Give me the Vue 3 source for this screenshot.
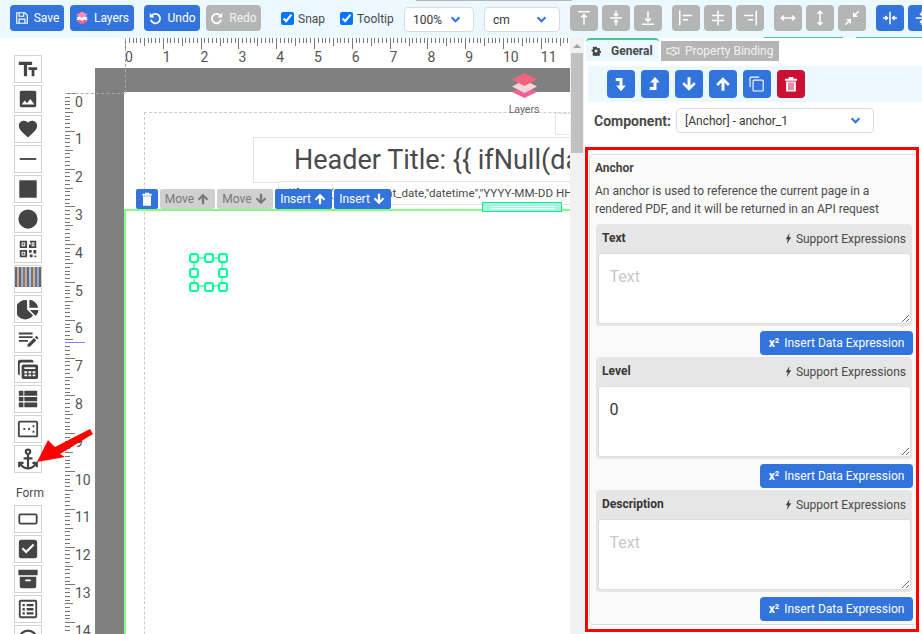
<script setup>
const cm = 37.8
const mm = cm / 10
const hTicks = Array.from({ length: 120 }, (_, i) => ({
  x: 60.5 + Math.round(i * mm),
  len: i % 10 === 0 ? 11 : i % 5 === 0 ? 8 : 5
}))
const hLabels = Array.from({ length: 12 }, (_, i) => ({ x: 60 + i * cm, t: i }))
const vTicks = Array.from({ length: 150 }, (_, i) => ({
  y: 25.5 + Math.round(i * mm),
  len: i % 10 === 0 ? 10 : i % 5 === 0 ? 8 : 5
}))
const vLabels = Array.from({ length: 15 }, (_, i) => ({ y: 38.5 + i * 37.8, t: i }))

const toolIcons = [
  { c: 'gray', d: 'M5 4.500h14 M12 20V8 M8.500 11.500 12 8l3.500 3.500' },
  { c: 'gray', d: 'M5 12h14 M12 3v6.500 M9.500 7l2.500 2.500L14.500 7 M12 21v-6.500 M9.500 17l2.500-2.500 2.500 2.500' },
  { c: 'gray', d: 'M5 19.500h14 M12 4v12 M8.500 12.500 12 16l3.500-3.500' },
  { c: 'gray', gap: true, d: 'M4.500 3v18 M8 9h11 M8 14h6.500' },
  { c: 'gray', d: 'M12 3v18 M5 9h14 M5 15h14' },
  { c: 'gray', d: 'M19.500 3v18 M5 9h11 M9.500 14H16' },
  { c: 'gray', gap: true, d: 'M4 12h16 M7 9l-3 3 3 3 M17 9l3 3-3 3' },
  { c: 'gray', d: 'M12 4v16 M9 7l3-3 3 3 M9 17l3 3 3-3' },
  { c: 'gray', d: 'M20 4l-6 6 M14 5.500V10h4.500 M4 20l6-6 M10 18.500V14H5.500' },
  { c: 'blue', gap: true, d: 'M12 4.500v15 M3.500 12H9 M6.500 9.500 9 12l-2.500 2.500 M20.500 12H15 M17.500 9.500 15 12l2.500 2.500' },
  { c: 'blue', d: 'M4.500 12h15 M12 3.500V9 M9.500 6.500 12 9l2.500-2.500 M12 20.500V15 M9.500 17.500 12 15l2.500 2.500' }
]

const palette = [
  { d: 'M2 4v3.500h5.500V20H11V7.500h5.500V4H2zm20 6h-9.500v3H16v7h3v-7h3v-3z' },
  { d: 'M21 19V5c0-1.100-.9-2-2-2H5c-1.100 0-2 .9-2 2v14c0 1.100.9 2 2 2h14c1.100 0 2-.9 2-2zM8.500 13.500l2.500 3.010L14.500 12l4.500 6H5l3.500-4.500z' },
  { d: 'M12 21.350l-1.450-1.320C5.400 15.360 2 12.280 2 8.500 2 5.420 4.420 3 7.500 3c1.740 0 3.410.81 4.500 2.090C13.090 3.810 14.760 3 16.500 3 19.580 3 22 5.420 22 8.500c0 3.780-3.400 6.860-8.550 11.540L12 21.350z' },
  { d: 'M3 11h18v2H3z' },
  { d: 'M2.500 2.500h19v19h-19z' },
  { d: 'M12 1.500a10.500 10.500 0 1 0 0 21 10.500 10.500 0 0 0 0-21z' },
  { d: 'M3 3h8v8H3zm2 2v4h4V5zm1 1h2v2H6zM14 3h7v8h-8V7h2V5h-1zm2 2v4h3V5zm1 1h1v2h-1zM3 13h8v8H3zm2 2v4h4v-4zm1 1h2v2H6zM13 13h3v3h-3zm5 0h3v4h-3zm-4 5h3v3h-3zm5 1h2v2h-2z' },
  { bars: true },
  { d: 'M11 3.500V12.500l6.500 6.500A10.500 10.500 0 1 1 11 2.500zM13.500 2v8.500H23A10 10 0 0 0 13.500 2zM14 13l9.500 0a11 11 0 0 1-3 6.500z' },
  { d: 'M2 5h15v2H2zm0 4h15v2H2zm0 4h10v2H2zm9.500 7.500V18l7-7 2.500 2.500-7 7zM19.500 10l1.500-1.500L23.500 11 22 12.500z' },
  { d: 'M3 2h13a2 2 0 0 1 2 2v1H5a2 2 0 0 0-2 2v12a2 2 0 0 1-2-2V4a2 2 0 0 1 2-2zm4 5h14a2 2 0 0 1 2 2v12a2 2 0 0 1-2 2H7a2 2 0 0 1-2-2V9a2 2 0 0 1 2-2zm1 3v2h12v-2zm0 4.500v2h3v-2zm4.500 0v2h3v-2zm4.500 0v2h3v-2zM8 18v2h3v-2zm4.500 0v2h3v-2zm4.500 0v2h3v-2z' },
  { d: 'M2 3h5v5.500H2zm6 0h14v5.500H8zM2 9.800h5v4.700H2zm6 0h14v4.700H8zM2 15.800h5V21H2zm6 0h14V21H8z' },
  { d: 'M3 3h18a2 2 0 0 1 2 2v14a2 2 0 0 1-2 2H3a2 2 0 0 1-2-2V5a2 2 0 0 1 2-2zm0 2v14h18V5zm4 6h2v2H7zm5 0h2v2h-2zm5-3h2v2h-2zm0 6h2v2h-2z' },
  { vb: '2.500 1.500 19 20', d: 'M12,2A3,3 0 0,0 9,5C9,6.270 9.800,7.400 11,7.830V10H8V12H11V18.920C9.160,18.630 7.530,17.570 6.530,16H8V14H3V19H5V17.300C6.580,19.610 9.200,21 12,21C14.800,21 17.420,19.610 19,17.310V19H21V14H16V16H17.460C16.460,17.560 14.830,18.630 13,18.920V12H16V10H13V7.820C14.200,7.400 15,6.270 15,5A3,3 0 0,0 12,2M12,4A1,1 0 0,1 13,5A1,1 0 0,1 12,6A1,1 0 0,1 11,5A1,1 0 0,1 12,4Z' }
]
const formPalette = [
  { d: 'M4 6h16a2.500 2.500 0 0 1 2.500 2.500v7A2.500 2.500 0 0 1 20 18H4a2.500 2.500 0 0 1-2.500-2.500v-7A2.500 2.500 0 0 1 4 6zm0 2a.5.5 0 0 0-.5.500v7a.5.5 0 0 0 .5.500h16a.5.5 0 0 0 .5-.5v-7A.5.5 0 0 0 20 8z' },
  { d: 'M19.500 2h-15C3.100 2 2 3.100 2 4.500v15C2 20.900 3.100 22 4.500 22h15c1.400 0 2.500-1.100 2.500-2.500v-15C22 3.100 20.900 2 19.500 2zM10 17l-5-5 1.700-1.700 3.300 3.300 7.300-7.300L19 8z' },
  { d: 'M1.500 2h21v6h-21zM3 9.500h18V20a2 2 0 0 1-2 2H5a2 2 0 0 1-2-2zM9 12.500v2h6v-2z' },
  { d: 'M4 2h16a2 2 0 0 1 2 2v16a2 2 0 0 1-2 2H4a2 2 0 0 1-2-2V4a2 2 0 0 1 2-2zm0 2v16h16V4zm2 2.500h2.500V9H6zm4.500 0H18V9h-7.500zM6 11h2.500v2.500H6zm4.500 0H18v2.500h-7.500zM6 15.500h2.500V18H6zm4.500 0H18V18h-7.500z' },
  { d: 'M12 1.500a10.500 10.500 0 1 0 0 21 10.500 10.500 0 0 0 0-21zm0 2.500a8 8 0 1 1 0 16 8 8 0 0 1 0-16z' }
]
const barColors = ['#5a6a80', '#d8a68a', '#666', '#8fb0dc', '#8a7a70', '#d0a090', '#5a6a80', '#a8c0e0', '#777', '#dca888', '#6a7688', '#8fb0dc', '#666']

const panelBtns = [
  { d: 'M5 4h9v10h4.500L12 21.500 5.500 14H10V8H5z' },
  { d: 'M5 20h9V10h4.500L12 2.500 5.500 10H10v6H5z' },
  { d: 'M12 21l-9-9 2.500-2.500 4.500 4.500V3h4v11l4.500-4.500L21 12z' },
  { d: 'M12 3l9 9-2.500 2.500L14 10v11h-4V10l-4.500 4.500L3 12z' },
  { d: 'M4 2h11v1.500H4a.5.5 0 0 0 -.5.500v12H2V4a2 2 0 0 1 2-2zm4 4h11a2 2 0 0 1 2 2v12a2 2 0 0 1-2 2H8a2 2 0 0 1-2-2V8a2 2 0 0 1 2-2zm0 1.500a.5.5 0 0 0-.5.500v12a.5.5 0 0 0 .5.500h11a.5.5 0 0 0 .5-.5V8a.5.5 0 0 0-.5-.5z' },
  { trash: true }
]
const fields = [
  { label: 'Text', ph: 'Text', val: '' },
  { label: 'Level', ph: '', val: '0' },
  { label: 'Description', ph: 'Text', val: '' }
]
const handles = ['tl', 'tc', 'tr', 'ml', 'mr', 'bl', 'bc', 'br']
</script>

<template>
  <div class="app">
    <header class="toolbar">
      <span class="topedge"></span>
      <span class="hiddentab a"></span>
      <span class="hiddentab b"></span>
      <button class="btn save"><svg class="ico" viewBox="0 0 24 24"><path fill="none" stroke="#fff" stroke-width="2" d="M4 3h13l4 4v14H3V3zM7 3v6h8V3M7 21v-7h10v7"/></svg>Save</button>
      <button class="btn layers"><svg class="ico" viewBox="0 0 24 24"><path fill="#fff" d="M12 9 22 14.500 12 20 2 14.500z"/><path fill="#f06292" d="M12 12 22 17 12 23 2 17z"/><path fill="#fff" d="M12 6 22 11.500 12 17 2 11.500z"/><path fill="#f48fb1" d="M12 1 22 6.500 12 12 2 6.500z"/></svg>Layers</button>
      <button class="btn undo"><svg class="ico" viewBox="0 0 24 24"><path fill="none" stroke="#fff" stroke-width="3" d="M6.500 8A8 8 0 1 1 5 15"/><path fill="#fff" d="M3 3v8h8z"/></svg>Undo</button>
      <button class="btn off redo"><svg class="ico" viewBox="0 0 24 24"><path fill="none" stroke="#fff" stroke-width="3" d="M17.500 8A8 8 0 1 0 19 15"/><path fill="#fff" d="M21 3v8h-8z"/></svg>Redo</button>
      <label class="check snap"><input type="checkbox" checked /><span>Snap</span></label>
      <label class="check tooltip"><input type="checkbox" checked /><span>Tooltip</span></label>
      <div class="select zoom">100%<svg class="chev" viewBox="0 0 12 8"><path fill="none" stroke="#3273dc" stroke-width="2.400" d="M1.500 1.500 6 6l4.500-4.500"/></svg></div>
      <div class="select unit">cm<svg class="chev" viewBox="0 0 12 8"><path fill="none" stroke="#3273dc" stroke-width="2.400" d="M1.500 1.500 6 6l4.500-4.500"/></svg></div>
      <div class="toolgroup">
        <button v-for="(t, i) in toolIcons" :key="i" class="tool" :class="[t.c, { gap: t.gap }]">
          <svg viewBox="0 0 24 24"><path fill="none" stroke="#fff" stroke-width="1.800" :d="t.d"/></svg>
        </button>
      </div>
    </header>

    <div class="main">
      <section class="work">
        <nav class="palette">
          <div v-for="(p, i) in palette" :key="i" class="pal">
            <svg v-if="p.bars" class="barcode" viewBox="0 0 26 24" preserveAspectRatio="none"><rect v-for="(c, j) in barColors" :key="j" :x="j * 2" y="0" width="2" height="24" :fill="c"/></svg>
            <svg v-else :viewBox="p.vb || '0 0 24 24'"><path fill="#444" fill-rule="evenodd" :d="p.d"/></svg>
          </div>
          <div class="formlabel">Form</div>
          <div v-for="(p, i) in formPalette" :key="'f' + i" class="pal">
            <svg viewBox="0 0 24 24"><path fill="#444" fill-rule="evenodd" :d="p.d"/></svg>
          </div>
        </nav>

        <div class="board">
          <svg class="hruler" width="505" height="30">
            <line v-for="(t, i) in hTicks" :key="i" :x1="t.x" :x2="t.x" y1="0" :y2="t.len" stroke="#777"/>
            <text v-for="l in hLabels" :key="l.t" :x="l.x" y="24" class="rl">{{ l.t }}</text>
          </svg>
          <div class="row">
            <svg class="vruler" width="30" height="566">
              <line v-for="(t, i) in vTicks" :key="i" x1="0" :x2="t.len" :y1="t.y" :y2="t.y" stroke="#777"/>
              <text v-for="l in vLabels" :key="l.t" x="10" :y="l.y" class="rl">{{ l.t }}</text>
              <rect x="0" y="274" width="20" height="1" fill="#8080ff"/>
            </svg>
            <div class="stage">
              <div class="page">
                <div class="margin"></div>
                <div class="ghost"></div>
                <div class="title">Header Title: &#123;&#123; ifNull(data.title) &#125;&#125;</div>
                <div class="sub">&#123;&#123;format(data.current_date,"datetime","YYYY-MM-DD HH:mm")&#125;&#125;</div>
                <div class="secline"></div>
                <div class="secleft"></div>
                <div class="actions">
                  <button class="act blue trashbtn"><svg viewBox="0 0 24 24"><path fill="#fff" d="M5 4h14v3H5zM9 2.500h6V4H9zM6 8h12v14H6z"/></svg></button>
                  <button class="act grey first">Move<svg viewBox="0 0 24 24"><path fill="#777" d="M12 3l9 9-2.500 2.500L14 10v11h-4V10l-4.500 4.500L3 12z"/></svg></button>
                  <button class="act grey">Move<svg viewBox="0 0 24 24"><path fill="#777" d="M12 21l-9-9 2.500-2.500 4.500 4.500V3h4v11l4.500-4.500L21 12z"/></svg></button>
                  <button class="act blue">Insert<svg viewBox="0 0 24 24"><path fill="#fff" d="M12 3l9 9-2.500 2.500L14 10v11h-4V10l-4.500 4.500L3 12z"/></svg></button>
                  <button class="act blue">Insert<svg viewBox="0 0 24 24"><path fill="#fff" d="M12 21l-9-9 2.500-2.500 4.500 4.500V3h4v11l4.500-4.500L21 12z"/></svg></button>
                </div>
                <div class="grip"></div>
                <div class="anchor">
                  <span v-for="h in handles" :key="h" class="hd" :class="h"></span>
                </div>
              </div>
              <div class="floatlayers">
                <svg viewBox="0 0 25 25"><path fill="#f06292" d="M12.500 13 25 19 12.500 25 0 19z"/><path fill="#f3d5dc" d="M12.500 7 25 13.500 12.500 20 0 13.500z"/><path fill="#f0647f" d="M12.500 0 25 6.500 12.500 13 0 6.500z"/></svg>
                <span>Layers</span>
              </div>
            </div>
          </div>
        </div>
        <i class="guide-v"></i>
        <i class="guide-h"></i>
      </section>

      <div class="scrollbar">
        <span class="sb-arrow"></span>
        <span class="sb-thumb"></span>
      </div>

      <aside class="side">
        <div class="tabs">
          <div class="tab active"><svg viewBox="0 0 24 24"><path fill="#444" fill-rule="evenodd" d="M10 2h4l.6 3 2 .9 2.600-1.700 2.800 2.800-1.700 2.600.9 2 3 .6v4l-3 .6-.9 2 1.700 2.600-2.800 2.800-2.600-1.700-2 .9-.6 3h-4l-.6-3-2-.9-2.600 1.700L3.600 18.400l1.700-2.600-.9-2-3-.6v-4l3-.6.9-2L3.600 4 6.400 1.200 9 2.900zM12 8.500a3.500 3.500 0 1 0 0 7 3.500 3.500 0 0 0 0-7z"/></svg>General</div>
          <div class="tab other"><svg viewBox="0 0 24 24"><path fill="none" stroke="#eee" stroke-width="2.200" d="M2 8h5l5-2 3 1h7v9h-4l-5 3-3-1-3-2H2zM9 13l4-3 5 6"/></svg>Property Binding</div>
        </div>
        <div class="panelbar">
          <button v-for="(b, i) in panelBtns" :key="i" class="pbtn" :class="{ danger: b.trash }">
            <svg v-if="b.trash" viewBox="0 0 24 24"><path fill="#fff" d="M4 5h16v2.500H4zM9 2.500h6V5H9zM5.500 8.500h13V22h-13z"/><path fill="#ee88a8" d="M8 10h8v10H8z"/></svg>
            <svg v-else viewBox="0 0 24 24"><path fill="#fff" fill-rule="evenodd" :d="b.d"/></svg>
          </button>
        </div>
        <div class="comp">
          <label>Component:</label>
          <div class="select cselect">[Anchor] - anchor_1<svg class="chev" viewBox="0 0 12 8"><path fill="none" stroke="#3273dc" stroke-width="2.400" d="M1.500 1.500 6 6l4.500-4.500"/></svg></div>
        </div>
        <div class="card">
          <div class="cardtitle">Anchor</div>
          <p class="desc">An anchor is used to reference the current page in a rendered PDF, and it will be returned in an API request</p>
          <div v-for="f in fields" :key="f.label" class="block">
            <div class="field">
              <div class="fhead">
                <strong>{{ f.label }}</strong>
                <span class="support"><svg viewBox="0 0 10 16"><path fill="#444" d="M6.500 0 1 9h3l-1.500 7L9 6H5.500z"/></svg>Support Expressions</span>
              </div>
              <textarea :placeholder="f.ph" :value="f.val"></textarea>
            </div>
            <button class="insert"><b>x²</b>Insert Data Expression</button>
          </div>
        </div>
      </aside>
    </div>

    <div class="redbox"></div>
    <svg class="arrow" width="100" height="60" viewBox="0 0 100 60"><path fill="#ff0000" d="M90 1 93 6 60 26 65 29 37 34 48 12 55 19z"/></svg>
  </div>
</template>

<style>
html, body { margin: 0; padding: 0; overflow: hidden; background: #fff; }
</style>

<style scoped>
.app {
  position: relative;
  width: 922px;
  height: 634px;
  overflow: hidden;
  font-family: Roboto, "Liberation Sans", sans-serif;
  color: #4a4a4a;
  background: #fff;
}
button { font-family: inherit; border: 0; padding: 0; cursor: pointer; }

.toolbar {
  position: relative;
  height: 38px;
  box-sizing: border-box;
  background: #ebf8ff;
  display: flex;
  align-items: flex-start;
  padding: 5px 0 0 10px;
  white-space: nowrap;
  overflow: hidden;
}
.topedge { position: absolute; left: 416px; top: 0; width: 156px; height: 1px; background: #b5b5b5; }
.hiddentab { position: absolute; top: 37px; height: 1px; background: #48c78e; }
.hiddentab.a { left: 764px; width: 79px; }
.hiddentab.b { left: 856px; width: 66px; }
.btn {
  height: 26px;
  border-radius: 4px;
  background: #3273dc;
  color: #fff;
  font-size: 12px;
  display: flex;
  align-items: center;
  justify-content: center;
  gap: 5px;
  flex: none;
}
.btn .ico { width: 14px; height: 14px; }
.btn.off { background: #b5b5b5; color: #f2f2f2; }
.save { width: 54px; }
.layers { width: 64px; margin-left: 6px; }
.undo { width: 56px; margin-left: 10px; }
.redo { width: 55px; margin-left: 6px; }
.check {
  display: flex;
  align-items: center;
  font-size: 12px;
  height: 26px;
  color: #4a4a4a;
  flex: none;
}
.check span { margin-top: 2px; }
.check input { margin: 0 4px 0 0; width: 13px; height: 13px; accent-color: #0075ff; }
.snap { margin-left: 20px; width: 59px; }
.tooltip { width: 64px; }
.select {
  box-sizing: border-box;
  height: 25px;
  border: 1px solid #dbdbdb;
  border-radius: 4px;
  background: #fff;
  font-size: 12px;
  display: flex;
  align-items: center;
  justify-content: space-between;
  padding: 0 12px 0 8px;
  color: #363636;
  flex: none;
}
.chev { width: 11px; height: 7px; flex: none; }
.zoom { width: 70px; margin-top: 2px; margin-left: 0; margin-right: 10px; }
.unit { width: 76px; margin-top: 2px; }
.toolgroup { display: flex; margin-left: 10px; gap: 4px; flex: none; }
.tool {
  width: 28px;
  height: 26px;
  border-radius: 4px;
  display: flex;
  align-items: center;
  justify-content: center;
  flex: none;
}
.tool.gap { margin-left: 6px; }
.tool svg { width: 20px; height: 20px; }
.tool.gray { background: #b5b5b5; }
.tool.blue { background: #3273dc; }

.main { display: flex; height: 596px; }
.work { position: relative; width: 570px; flex: none; display: flex; overflow: hidden; }
.palette {
  width: 65px;
  box-sizing: border-box;
  padding: 17px 0 0 14px;
  display: flex;
  flex-direction: column;
  gap: 2px;
  flex: none;
}
.pal {
  box-sizing: border-box;
  width: 28px;
  height: 28px;
  border: 1px solid #d2d2d2;
  display: flex;
  align-items: center;
  justify-content: center;
  flex: none;
  overflow: hidden;
  background: #fff;
}
.pal svg { width: 22px; height: 22px; }
.pal svg.barcode { width: 26px; height: 20px; margin-top: -4px; }
.formlabel {
  font-size: 12px;
  height: 16px;
  margin: 10px 0 2px 2px;
  line-height: 16px;
  color: #4a4a4a;
}
.board { flex: 1; display: flex; flex-direction: column; min-width: 0; }
.hruler, .vruler { display: block; flex: none; }
.rl { font-size: 14px; fill: #555; font-family: Roboto, sans-serif; }
.row { display: flex; flex: 1; min-height: 0; }
.stage {
  position: relative;
  flex: 1;
  background: #808080;
  padding: 24px 0 0 29px;
  overflow: hidden;
}
.page { position: relative; width: 700px; height: 900px; background: #fff; }
.margin { position: absolute; left: 20px; top: 20px; width: 600px; height: 800px; border: 1px dashed #ccc; }
.ghost { position: absolute; left: 431px; top: 21px; width: 40px; height: 20px; border: 1px solid #e6e6e6; }
.title {
  position: absolute; left: 129px; top: 45px; width: 500px; height: 46px; box-sizing: border-box;
  border: 1px solid #e4e4e4; padding-left: 40px; font-size: 27px; line-height: 44px; color: #4a4a4a; white-space: nowrap; background: #fff;
}
.sub {
  position: absolute; left: 154px; top: 89px; width: 500px; height: 24px; box-sizing: border-box;
  border: 1px solid #e4e4e4; padding-left: 8px; font-size: 11.600px; line-height: 23px; color: #4a4a4a; white-space: nowrap; background: #fff;
}
.secline { position: absolute; left: 0; top: 117px; width: 100%; height: 2px; background: #80ff80; }
.secleft { position: absolute; left: 0; top: 117px; bottom: 0; width: 2px; background: #80ff80; }
.actions { position: absolute; left: 12px; top: 97px; display: flex; gap: 2px; }
.act {
  height: 20px; border-radius: 2px; font-size: 12px; display: flex; align-items: center; justify-content: center; gap: 2px;
}
.act svg { width: 14px; height: 14px; }
.act.blue { background: #3273dc; color: #fff; width: 57px; }
.act.grey { background: #d0d0d0; color: #7a7a7a; width: 56px; }
.act.grey.first { width: 55px; }
.act.trashbtn { width: 22px; }
.act.trashbtn svg { width: 16px; height: 16px; }
.grip {
  position: absolute; left: 358px; top: 110px; width: 80px; height: 10px; box-sizing: border-box;
  border: 1px solid #1fe09a; background: #a0f8d8;
}
.grip::before {
  content: ""; position: absolute; left: 8px; right: 6px; top: 3px; height: 3px; box-sizing: border-box;
  border-top: 1px solid #fff; border-bottom: 1px solid #fff;
}
.anchor { position: absolute; left: 69px; top: 165px; width: 30px; height: 30px; box-sizing: border-box; border: 2px solid #70ffb8; }
.hd {
  position: absolute; width: 10px; height: 10px; box-sizing: border-box; border: 2px solid #00ff99; border-radius: 3px; background: #f4fff8;
}
.tl { left: -6px; top: -6px; } .tc { left: 9px; top: -6px; } .tr { left: 23px; top: -6px; }
.ml { left: -6px; top: 9px; } .mr { left: 23px; top: 9px; }
.bl { left: -6px; top: 23px; } .bc { left: 9px; top: 23px; } .br { left: 23px; top: 23px; }
.floatlayers {
  position: absolute; left: 401px; top: 5px; width: 56px; display: flex; flex-direction: column; align-items: center; color: #666; font-size: 10.500px;
}
.floatlayers svg { width: 25px; height: 25px; }
.floatlayers span { margin-top: 5px; }
.guide-v { position: absolute; left: 125px; top: 0; height: 55px; border-left: 1px dashed #aaa; }
.guide-h { position: absolute; left: 65px; top: 55px; width: 60px; border-top: 1px dashed #aaa; }

.scrollbar { position: relative; width: 14px; background: #f1f1f1; flex: none; }
.sb-arrow {
  position: absolute; left: 3px; top: 6px; width: 0; height: 0;
  border-left: 4px solid transparent; border-right: 4px solid transparent; border-bottom: 4px solid #a3a3a3;
}
.sb-thumb { position: absolute; left: 1px; right: 1px; top: 15px; height: 100px; background: #c1c1c1; }

.side { flex: 1; min-width: 0; overflow: hidden; padding-left: 2px; }
.tabs { display: flex; align-items: flex-end; height: 23px; gap: 2px; }
.tab { display: flex; align-items: center; font-size: 12px; box-sizing: border-box; flex: none; }
.tab.active {
  width: 73px; height: 23px; background: #ebf8ff; border-top: 2px solid #48c78e; border-radius: 4px 4px 0 0; font-weight: 700; padding-left: 5px; color: #4a4a4a;
}
.tab.active svg { width: 10px; height: 10px; margin-right: 10px; }
.tab.other { width: 118px; height: 20px; background: #b5b5b5; color: #f2f2f2; padding-left: 5px; }
.tab.other svg { width: 14px; height: 14px; margin-right: 5px; }
.panelbar {
  margin: 5px 0 0 2px;
  height: 36px;
  background: #ebf8ff;
  display: flex;
  gap: 6px;
  padding: 4px 0 0 19px;
  box-sizing: border-box;
}
.pbtn { width: 28px; height: 28px; border-radius: 4px; background: #3273dc; display: flex; align-items: center; justify-content: center; flex: none; }
.pbtn svg { width: 18px; height: 18px; }
.pbtn.danger { background: #cc0f35; }
.comp { display: flex; align-items: center; height: 25px; margin: 6px 0 0 8px; }
.comp label { width: 82px; font-size: 14px; font-weight: 700; flex: none; }
.cselect { width: 198px; }
.card {
  box-sizing: border-box;
  margin: 21px 0 0 3px;
  width: 329px;
  height: 471px;
  background: #fafafa;
  border: 1px solid #ddd;
  border-radius: 4px;
  padding: 5px 5px 0 5px;
}
.cardtitle { font-size: 12px; font-weight: 700; line-height: 16px; color: #444; }
.desc { margin: 6px 0 6px; font-size: 12px; line-height: 18px; color: #4a4a4a; width: 300px; }
.block { width: 317px; margin-left: 1px; margin-bottom: 2px; }
.field { box-sizing: border-box; width: 316px; height: 102px; background: #e6e6e6; border-radius: 4px; padding: 0 1.500px; }
.fhead { display: flex; justify-content: space-between; align-items: center; height: 29px; padding: 0 4.500px; font-size: 12px; }
.fhead strong { color: #363636; margin-top: -1px; }
.support { display: flex; align-items: center; color: #4a4a4a; }
.support svg { width: 7px; height: 11px; margin-right: 4px; }
textarea {
  display: block;
  box-sizing: border-box;
  width: 313px;
  height: 71px;
  border: 1px solid #ddd;
  border-radius: 3px;
  padding: 12px 11px;
  font-family: inherit;
  font-size: 16px;
  line-height: 22px;
  background: #fff;
  color: #363636;
  outline: none;
}
textarea::placeholder { color: #c8c8c8; opacity: 1; }
.insert {
  display: flex;
  align-items: center;
  justify-content: center;
  box-sizing: border-box;
  margin: 5px 0 0 164px;
  width: 153px;
  height: 24px;
  padding-bottom: 1px;
  border-radius: 4px;
  background: #3273dc;
  color: #fff;
  font-size: 12px;
}
.insert b { margin-right: 5px; font-size: 12px; }
.redbox {
  position: absolute;
  left: 585px;
  top: 147px;
  width: 334px;
  height: 485px;
  box-sizing: border-box;
  border: 3px solid #f00;
  pointer-events: none;
}
.arrow { position: absolute; left: 0; top: 428px; pointer-events: none; }
</style>
